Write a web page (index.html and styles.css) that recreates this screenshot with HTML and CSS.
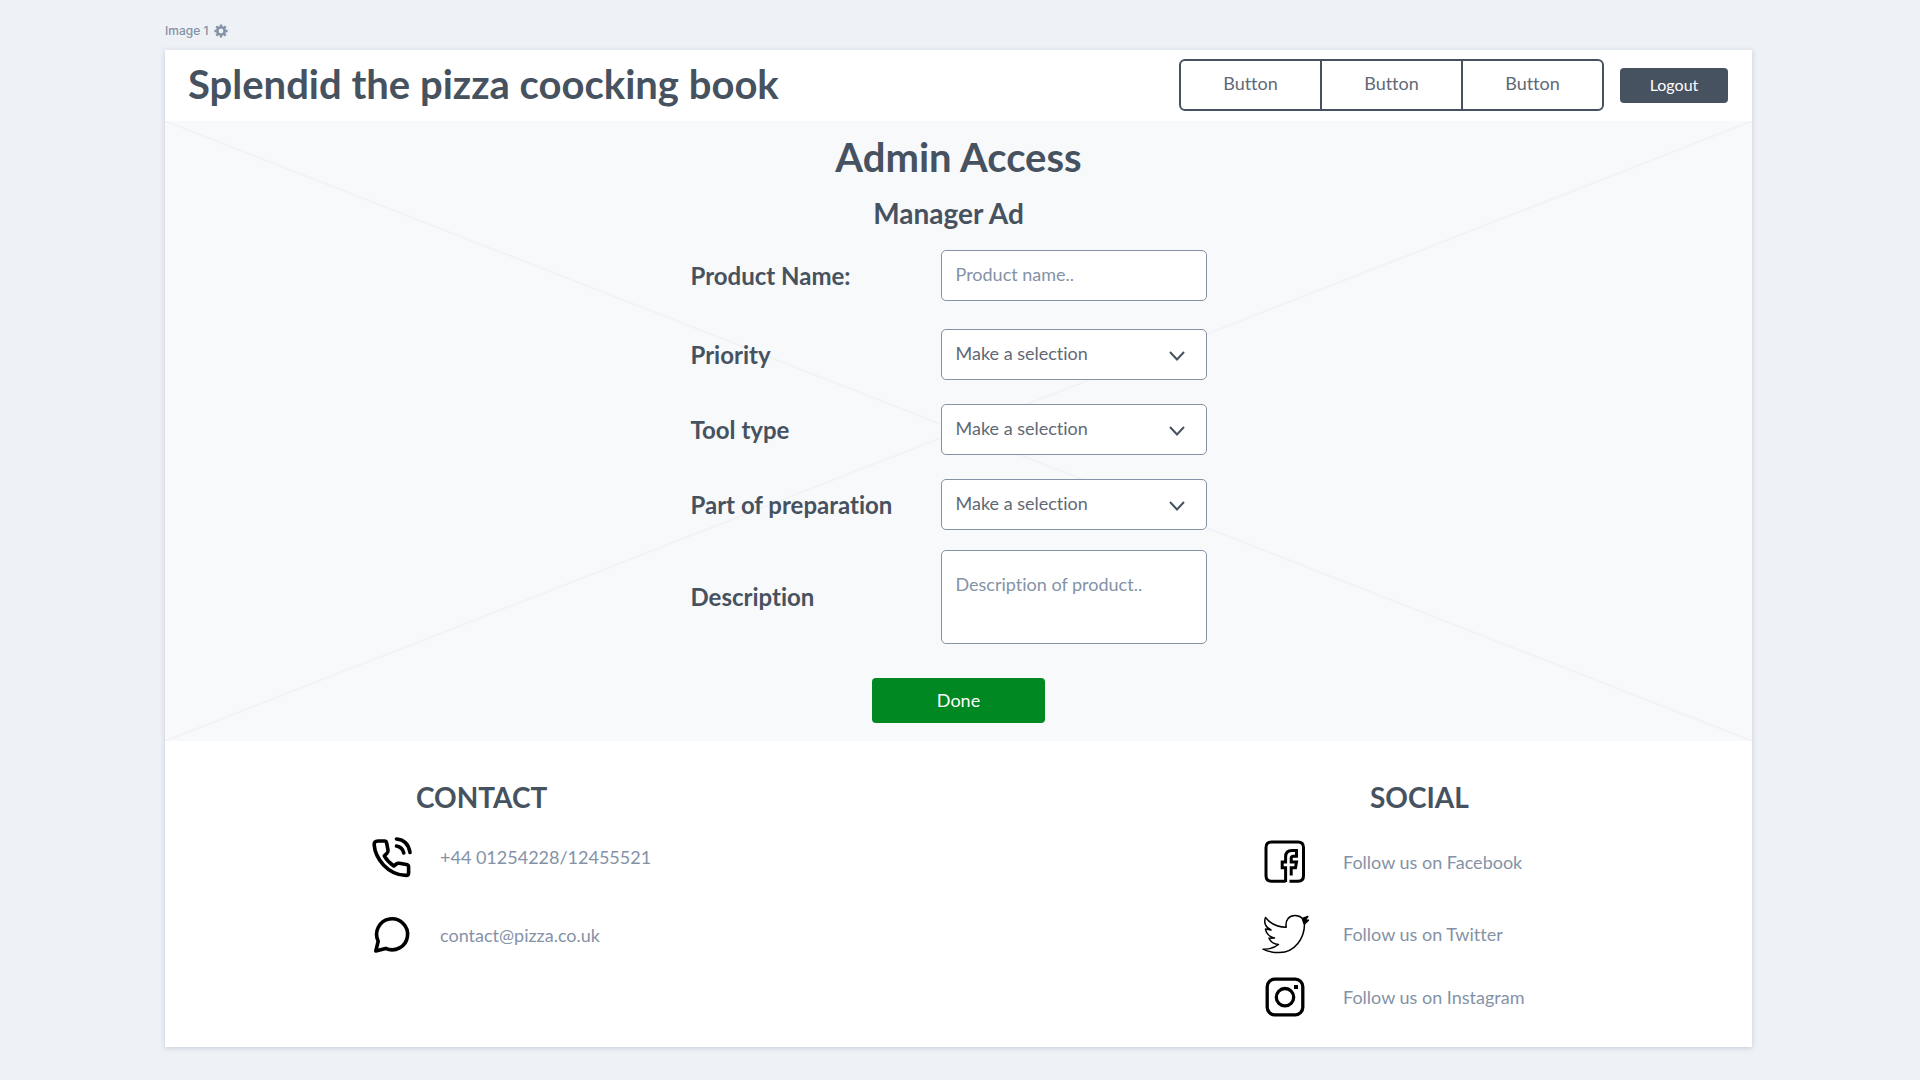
FILE: index.html
```html
<!DOCTYPE html>
<html lang="en">
<head>
<meta charset="utf-8">
<meta name="viewport" content="width=device-width, initial-scale=1">
<title>Splendid the pizza coocking book</title>
<link rel="stylesheet" href="styles.css">
</head>
<body>
<div class="caption">
  <span>Image 1</span>
  <svg class="caption-gear" viewBox="0 0 14 14" aria-hidden="true">
    <g fill="none" stroke="currentColor">
      <circle cx="7" cy="7" r="3.7" stroke-width="2.6"/>
      <path stroke-width="2.4" d="M7 .4v2.2M7 11.400v2.200M.4 7h2.200M11.400 7h2.200M2.300 2.300l1.500 1.500M10.200 10.200l1.500 1.500M2.300 11.700l1.500-1.500M10.200 3.800l1.500-1.500"/>
    </g>
  </svg>
</div>

<div class="card">
  <header class="header">
    <h1 class="title">Splendid the pizza coocking book</h1>
    <nav class="nav">
      <div class="button-group">
        <button class="group-button" type="button">Button</button>
        <button class="group-button" type="button">Button</button>
        <button class="group-button" type="button">Button</button>
      </div>
      <button class="logout" type="button">Logout</button>
    </nav>
  </header>

  <main class="main">
    <svg class="cross" aria-hidden="true">
      <line x1="0" y1="0" x2="100%" y2="100%"/>
      <line x1="0" y1="100%" x2="100%" y2="0"/>
    </svg>
    <h2 class="title">Admin Access</h2>
    <form class="form">
      <div class="fields">
        <h3 class="subtitle">Manager Ad</h3>
        <div class="row">
          <label class="label" for="name">Product Name:</label>
          <input class="control" id="name" type="text" placeholder="Product name..">
        </div>
        <div class="selects">
          <div class="row">
            <label class="label" for="priority">Priority</label>
            <div class="select">
              <select class="control" id="priority"><option>Make a selection</option></select>
              <svg class="chevron" viewBox="0 0 18 12" aria-hidden="true"><path d="M2 2l7 7.500 7-7.500"/></svg>
            </div>
          </div>
          <div class="row">
            <label class="label" for="tool">Tool type</label>
            <div class="select">
              <select class="control" id="tool"><option>Make a selection</option></select>
              <svg class="chevron" viewBox="0 0 18 12" aria-hidden="true"><path d="M2 2l7 7.500 7-7.500"/></svg>
            </div>
          </div>
          <div class="row">
            <label class="label" for="part">Part of preparation</label>
            <div class="select">
              <select class="control" id="part"><option>Make a selection</option></select>
              <svg class="chevron" viewBox="0 0 18 12" aria-hidden="true"><path d="M2 2l7 7.500 7-7.500"/></svg>
            </div>
          </div>
        </div>
        <div class="row">
          <label class="label" for="description">Description</label>
          <textarea class="control control-area" id="description" placeholder="Description of product.."></textarea>
        </div>
      </div>
      <button class="done" type="button">Done</button>
    </form>
  </main>

  <footer class="footer">
    <section class="contact">
      <h3 class="subtitle">CONTACT</h3>
      <ul class="list contact-list">
        <li class="item">
          <svg class="icon" viewBox="0 0 48 48" aria-hidden="true">
            <g fill="none" stroke="#000" stroke-width="3.600" stroke-linejoin="round">
              <path d="M10 8H16.500Q18.200 8 18.600 9.800L20 17Q20.300 19 19 20.200L16.300 22.800Q19.500 28.500 25.800 33L28.300 31Q29.500 30 31.200 30.300L38.500 31.600Q40.600 32 40.600 34V40Q40.600 42.400 38 42.400Q25 42.200 15.500 32Q7 22.500 6.200 12Q5.800 8 10 8Z"/>
              <path stroke-linecap="round" d="M28.500 6Q40 7 42 19.500M28.500 13Q34.500 14.200 35.800 20"/>
            </g>
          </svg>
          <span>+44 01254228/12455521</span>
        </li>
        <li class="item">
          <svg class="icon" viewBox="0 0 48 48" aria-hidden="true">
            <path fill="none" stroke="#000" stroke-width="3.600" stroke-linejoin="round" d="M10.200 30.200A15.500 15.500 0 1 1 17.600 37.400L7.800 40Z"/>
          </svg>
          <span>contact@pizza.co.uk</span>
        </li>
      </ul>
    </section>
    <section class="social">
      <h3 class="subtitle">SOCIAL</h3>
      <ul class="list social-list">
        <li class="item">
          <svg class="icon" viewBox="0 0 48 48" aria-hidden="true">
            <g fill="none" stroke="#000" stroke-width="3">
              <path d="M24.600 43.200H10.500Q5 43.200 5 37.700V9.500Q5 4 10.500 4H37Q42.500 4 42.500 9.500V37.700Q42.500 43.200 37 43.200H28.500"/>
              <path d="M24.600 44V29.800H21.200V24H24.600V19Q24.600 12.500 31 12.500H35.500V18.300H32.500Q30.200 18.300 30.200 20.500V24H35.500L34.500 29.800H30.200V37.500"/>
            </g>
          </svg>
          <a class="link" href="#facebook">Follow us on Facebook</a>
        </li>
        <li class="item">
          <svg class="icon" viewBox="0 0 48 48" aria-hidden="true">
            <path fill="none" stroke="#000" stroke-width="1.500" stroke-linejoin="round" d="M4.500 7.500Q12 17 25.200 17.200C24 9.500 28.500 5.500 34 5.500Q38.500 5.500 41.500 8.500L46.800 6.500L44.200 10L47.500 10.200L43.500 14C43.500 28 34 42.500 18.500 42.500Q8 42.500 2 39.200Q11 39.600 17.500 34.500Q10.500 34 8 28.200L13.500 28Q5.500 26 4.500 19L10 20Q1.500 15.500 4.500 7.500Z"/>
            <path fill="#000" d="M40.500 8.500L46.800 6.500L44.500 9.800L47.500 10.200L42.500 14.500Z"/>
          </svg>
          <a class="link" href="#twitter">Follow us on Twitter</a>
        </li>
        <li class="item">
          <svg class="icon" viewBox="0 0 48 48" aria-hidden="true">
            <g fill="none" stroke="#000" stroke-width="3.300">
              <rect x="6.200" y="6.200" width="35.600" height="35.600" rx="7.500"/>
              <circle cx="24" cy="24.200" r="8.700"/>
            </g>
            <rect x="33" y="12" width="4" height="4"/>
          </svg>
          <a class="link" href="#instagram">Follow us on Instagram</a>
        </li>
      </ul>
    </section>
  </footer>
</div>
</body>
</html>
```

FILE: styles.css
```css
* {
  box-sizing: border-box;
}

body {
  margin: 0;
  padding: 20px 168px 32px 165px;
  background: #eef1f6;
  color: #475260;
  font-family: Lato, "Liberation Sans", sans-serif;
  font-size: 18px;
  line-height: 22px;
  font-variant-ligatures: none;
}

h1,
h2,
h3,
ul {
  margin: 0;
  padding: 0;
}

button,
input,
select,
textarea {
  font: inherit;
  font-variant-ligatures: none;
  color: inherit;
}

button {
  padding: 0 0 2px;
  border: 0;
}

.caption {
  display: flex;
  align-items: center;
  gap: 6px;
  height: 30px;
  padding-bottom: 8px;
  color: #8492a6;
  font-family: Inter, sans-serif;
  font-size: 12px;
  font-weight: 500;
}

.caption-gear {
  width: 14px;
  height: 14px;
}

.card {
  background: #fff;
  box-shadow: 0 1px 5px rgba(71, 90, 130, 0.25);
}

.header {
  display: flex;
  align-items: center;
  justify-content: space-between;
  min-height: 71px;
  padding: 0 24px 0 23px;
}

.title {
  font-size: 40px;
  line-height: 48px;
  font-weight: 700;
}

.header .title {
  padding-bottom: 4px;
}

.subtitle {
  font-size: 28px;
  line-height: 34px;
  font-weight: 700;
}

.nav {
  display: flex;
  align-items: center;
  gap: 16px;
}

.button-group {
  display: flex;
  width: 425px;
  margin-bottom: 1px;
  border: 2px solid #475260;
  border-radius: 6px;
}

.group-button {
  flex: 1;
  height: 48px;
  padding-bottom: 5px;
  background: none;
  color: #5f6975;
}

.group-button + .group-button {
  border-left: 2px solid #475260;
}

.logout {
  width: 108px;
  height: 35px;
  border-radius: 4px;
  background: #475260;
  color: #fff;
  font-size: 16px;
}

.main {
  position: relative;
  display: flex;
  flex-direction: column;
  align-items: center;
  padding: 12px 0 18px;
  background: #f8f9fb;
}

.cross {
  position: absolute;
  inset: 0;
  width: 100%;
  height: 100%;
  stroke: #f2f3f5;
  stroke-width: 2;
}

.main > .title,
.form {
  position: relative;
}

.form {
  display: flex;
  flex-direction: column;
  align-items: center;
  gap: 34px;
  padding-top: 15px;
}

.fields {
  display: flex;
  flex-direction: column;
  gap: 20px;
  width: 536px;
  padding-right: 20px;
}

.fields .subtitle {
  text-align: center;
}

.selects {
  display: flex;
  flex-direction: column;
  gap: 24px;
  padding-top: 8px;
}

.row {
  display: grid;
  grid-template-columns: 1fr 266px;
  align-items: center;
}

.label {
  font-size: 24px;
  line-height: 28px;
  font-weight: 700;
}

.control {
  display: block;
  width: 100%;
  height: 51px;
  padding: 0 14px 4px;
  border: 1px solid #8492a6;
  border-radius: 5px;
  background: #fff;
}

.control::placeholder {
  color: #8492a6;
  opacity: 1;
}

.control-area {
  height: 94px;
  padding-top: 22px;
  resize: none;
}

.select {
  position: relative;
  color: #5f6975;
}

.select .control {
  appearance: none;
}

.chevron {
  position: absolute;
  top: 21px;
  right: 21px;
  width: 18px;
  height: 12px;
  fill: none;
  stroke: #475260;
  stroke-width: 2;
  pointer-events: none;
}

.done {
  width: 173px;
  height: 45px;
  border-radius: 4px;
  background: #008822;
  color: #fff;
}

.footer {
  display: flex;
  justify-content: space-between;
  padding: 39px 203px 26px;
  color: #8492a6;
}

.footer .subtitle {
  color: #475260;
}

.list {
  list-style: none;
}

.contact .subtitle {
  padding-left: 48px;
}

.social {
  width: 288px;
}

.social .subtitle {
  padding-left: 109px;
}

.contact-list {
  display: grid;
  gap: 30px;
  padding-top: 19px;
}

.social-list {
  display: grid;
  grid-template-rows: 72px 63px 48px;
  align-items: start;
  padding-top: 24px;
}

.item {
  display: flex;
  align-items: center;
  gap: 24px;
}

.social-list .item {
  gap: 34px;
}

.icon {
  flex: none;
  width: 48px;
  height: 48px;
}

.link {
  color: inherit;
  text-decoration: none;
}
```
